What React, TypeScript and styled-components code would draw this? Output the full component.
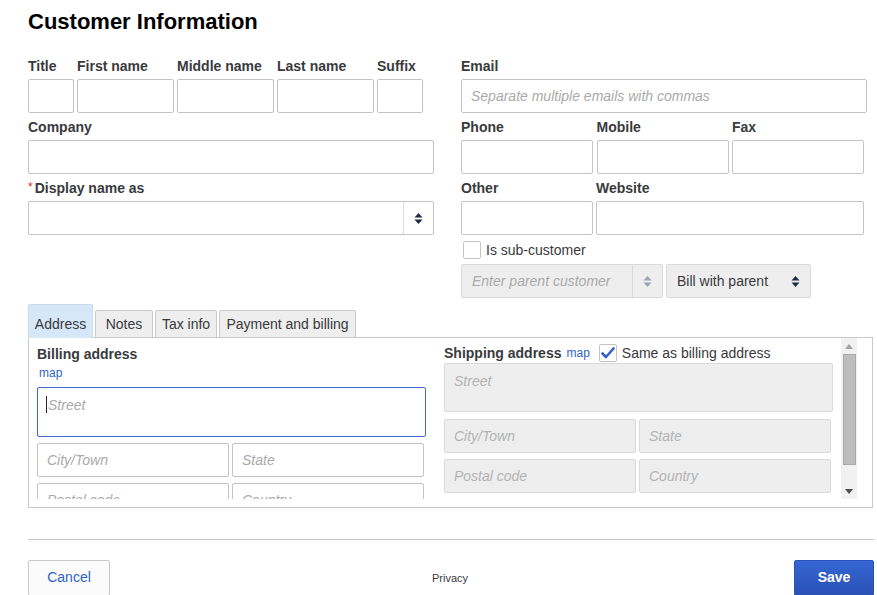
import React from 'react';
import styled, { createGlobalStyle } from 'styled-components';

const Global = createGlobalStyle`
  html, body { margin: 0; padding: 0; background: #fff; }
  body { font-family: "Liberation Sans", Arial, Helvetica, sans-serif; color: #393a3d; }
  * { box-sizing: border-box; }
  input { font-family: inherit; }
`;

const Page = styled.div`
  width: 877px;
  height: 595px;
  overflow: hidden;
  padding: 9px 3px 0 28px;
`;

const Heading = styled.h1`
  margin: 0;
  font-size: 22px;
  line-height: 25px;
  font-weight: 700;
  color: #000;
`;

const TopGrid = styled.div`
  display: grid;
  grid-template-columns: 406px 406px;
  column-gap: 27px;
  margin-top: 24px;
  align-items: start;
`;

const Column = styled.div`
  display: flex;
  flex-direction: column;
  gap: 6px;
`;

const FieldRow = styled.div<{ $cols: string; $gap?: number }>`
  display: grid;
  grid-template-columns: ${(p) => p.$cols};
  column-gap: ${(p) => p.$gap ?? 3}px;
`;

const Field = styled.div`
  display: flex;
  flex-direction: column;
  min-width: 0;
`;

const Label = styled.label`
  display: block;
  height: 16px;
  font-size: 14px;
  font-weight: 700;
  line-height: 16px;
  margin-bottom: 5px;
  color: #393a3d;
  white-space: nowrap;
`;

const Required = styled.span`
  color: #e0301e;
  font-size: 12px;
  font-weight: 400;
  line-height: 0;
  margin-right: 2px;
  vertical-align: 2px;
`;

const TextInput = styled.input<{ $disabled?: boolean; $h?: number }>`
  display: block;
  width: 100%;
  height: ${(p) => p.$h ?? 34}px;
  margin: 0;
  padding: 0 9px;
  border: 1px solid ${(p) => (p.$disabled ? '#d9d9d9' : '#c4c4c4')};
  border-radius: 2px;
  background: ${(p) => (p.$disabled ? '#eeeeee' : '#fff')};
  font-size: 14px;
  color: #393a3d;
  outline: none;
  &::placeholder {
    color: ${(p) => (p.$disabled ? '#b3b3b3' : '#aaaaaa')};
    font-style: italic;
  }
`;

const AreaBox = styled.div<{ $focused?: boolean; $h: number }>`
  height: ${(p) => p.$h}px;
  border: 1px solid ${(p) => (p.$focused ? '#3f67c6' : '#d9d9d9')};
  border-radius: 2px;
  background: ${(p) => (p.$focused ? '#fff' : '#eeeeee')};
  padding: 8px 9px 0 ${(p) => (p.$focused ? 8 : 9)}px;
  font-size: 14px;
  line-height: 18px;
  display: flex;
  align-items: flex-start;
`;

const Caret = styled.span`
  display: inline-block;
  width: 1px;
  height: 17px;
  background: #222;
  margin-right: 1px;
`;

const Placeholder = styled.span<{ $disabled?: boolean }>`
  color: ${(p) => (p.$disabled ? '#b3b3b3' : '#aaaaaa')};
  font-style: italic;
`;

const SelectBox = styled.div<{ $w?: number; $disabled?: boolean }>`
  display: flex;
  height: 34px;
  width: ${(p) => (p.$w ? `${p.$w}px` : '100%')};
  border: 1px solid ${(p) => (p.$disabled ? '#d9d9d9' : '#c4c4c4')};
  border-radius: 2px;
  background: ${(p) => (p.$disabled ? '#eeeeee' : '#fff')};
`;

const SelectValue = styled.div<{ $placeholder?: boolean }>`
  flex: 1;
  display: flex;
  align-items: center;
  padding: 0 10px;
  font-size: 14px;
  white-space: nowrap;
  color: ${(p) => (p.$placeholder ? '#aaaaaa' : '#393a3d')};
  font-style: ${(p) => (p.$placeholder ? 'italic' : 'normal')};
`;

const SelectArrow = styled.div<{ $divider?: boolean; $disabled?: boolean }>`
  width: 30px;
  flex: none;
  display: flex;
  align-items: center;
  justify-content: center;
  border-left: ${(p) => (p.$divider ? `1px solid ${p.$disabled ? '#d9d9d9' : '#dddddd'}` : 'none')};
`;

const Arrows = ({ color }: { color: string }) => (
  <svg width="9" height="13" viewBox="0 0 9 13">
    <path d="M0.5 5.5 L4.5 1 L8.5 5.5 Z" fill={color} />
    <path d="M0.5 7.5 L8.5 7.5 L4.5 12 Z" fill={color} />
  </svg>
);

const CheckRow = styled.div`
  display: flex;
  align-items: center;
  height: 18px;
  padding-left: 2px;
  gap: 5px;
  font-size: 14px;
`;

const CheckBox = styled.span<{ $checked?: boolean }>`
  width: 18px;
  height: 18px;
  flex: none;
  border: 1px solid #c4c4c4;
  border-radius: 2px;
  background: #fff;
  display: inline-flex;
  align-items: center;
  justify-content: center;
`;

const SelectRow = styled.div`
  display: flex;
  gap: 3px;
  margin-top: -1px;
`;

const TabBar = styled.div`
  display: flex;
  align-items: flex-end;
  gap: 2px;
  height: 34px;
  margin-top: 6px;
  margin-bottom: -1px;
  position: relative;
  z-index: 1;
`;

const Tab = styled.div<{ $active?: boolean; $w: number }>`
  width: ${(p) => p.$w}px;
  height: ${(p) => (p.$active ? 34 : 28)}px;
  padding-top: ${(p) => (p.$active ? 6 : 0)}px;
  display: flex;
  align-items: center;
  justify-content: center;
  font-size: 14px;
  color: #393a3d;
  background: ${(p) => (p.$active ? '#d5e7f8' : '#eeeeee')};
  border: 1px solid ${(p) => (p.$active ? '#c7dbee' : '#c9c9c9')};
  border-bottom-color: ${(p) => (p.$active ? '#d5e7f8' : '#c9c9c9')};
  border-radius: 2px 2px 0 0;
`;

const Panel = styled.div`
  width: 845px;
  height: 171px;
  border: 1px solid #c9c9c9;
  display: flex;
  padding: 0 15px 8px 8px;
`;

const ScrollArea = styled.div`
  flex: 1;
  overflow: hidden;
  display: grid;
  grid-template-columns: 389px 389px;
  column-gap: 18px;
  align-items: start;
`;

const AddressCol = styled.div<{ $top: number }>`
  display: flex;
  flex-direction: column;
  padding-top: ${(p) => p.$top}px;
`;

const SectionTitle = styled.div`
  font-size: 14px;
  font-weight: 700;
  line-height: 16px;
  color: #393a3d;
  white-space: nowrap;
`;

const MapLink = styled.a`
  font-size: 12px;
  line-height: 14px;
  color: #2f64c8;
  text-decoration: none;
  padding-left: 2px;
`;

const ShipHeader = styled.div`
  display: flex;
  align-items: center;
  height: 20px;
  font-size: 14px;
  white-space: nowrap;
`;

const Pair = styled.div<{ $mt: number }>`
  display: grid;
  grid-template-columns: 192px 192px;
  column-gap: 3px;
  margin-top: ${(p) => p.$mt}px;
`;

const Scrollbar = styled.div`
  width: 16px;
  flex: none;
  height: 161px;
  background: #f1f1f1;
  display: flex;
  flex-direction: column;
  align-items: center;
`;

const ScrollBtn = styled.div`
  height: 16px;
  width: 16px;
  display: flex;
  align-items: center;
  justify-content: center;
`;

const Thumb = styled.div`
  width: 13px;
  height: 111px;
  margin-left: 1px;
  background: #bdbdbd;
  border: 1px solid #a8a8a8;
`;

const TrackGap = styled.div`
  flex: 1;
`;

const Divider = styled.div`
  width: 846px;
  height: 1px;
  background: #c9c9c9;
  margin-top: 31px;
`;

const Footer = styled.div`
  width: 846px;
  display: flex;
  justify-content: space-between;
  align-items: center;
  margin-top: 20px;
`;

const Button = styled.button<{ $primary?: boolean; $w: number }>`
  width: ${(p) => p.$w}px;
  height: 36px;
  border-radius: 2px;
  font-family: inherit;
  font-size: 14px;
  font-weight: ${(p) => (p.$primary ? 700 : 400)};
  color: ${(p) => (p.$primary ? '#fff' : '#2f64c8')};
  background: ${(p) => (p.$primary ? 'linear-gradient(#3566d2, #2b51b6)' : '#fbfbfb')};
  border: 1px solid ${(p) => (p.$primary ? '#2b52b8' : '#c9c9c9')};
  padding: 0 0 2px;
`;

const Privacy = styled.span`
  font-size: 11px;
  color: #393a3d;
  margin-right: 4px;
`;

export default function App() {
  return (
    <>
      <Global />
      <Page>
        <Heading>Customer Information</Heading>
        <TopGrid>
          <Column>
            <FieldRow $cols="46px 97px 97px 97px 46px">
              <Field><Label>Title</Label><TextInput /></Field>
              <Field><Label>First name</Label><TextInput /></Field>
              <Field><Label>Middle name</Label><TextInput /></Field>
              <Field><Label>Last name</Label><TextInput /></Field>
              <Field><Label>Suffix</Label><TextInput /></Field>
            </FieldRow>
            <Field><Label>Company</Label><TextInput /></Field>
            <Field>
              <Label><Required>*</Required>Display name as</Label>
              <SelectBox>
                <SelectValue />
                <SelectArrow $divider><Arrows color="#1d2c44" /></SelectArrow>
              </SelectBox>
            </Field>
          </Column>
          <Column>
            <Field>
              <Label>Email</Label>
              <TextInput placeholder="Separate multiple emails with commas" />
            </Field>
            <FieldRow $cols="132px 132px 132px" $gap={3.5}>
              <Field><Label>Phone</Label><TextInput /></Field>
              <Field><Label>Mobile</Label><TextInput /></Field>
              <Field><Label>Fax</Label><TextInput /></Field>
            </FieldRow>
            <FieldRow $cols="132px 268px">
              <Field><Label>Other</Label><TextInput /></Field>
              <Field><Label>Website</Label><TextInput /></Field>
            </FieldRow>
            <CheckRow>
              <CheckBox />
              <span>Is sub-customer</span>
            </CheckRow>
            <SelectRow>
              <SelectBox $w={202} $disabled>
                <SelectValue $placeholder>Enter parent customer</SelectValue>
                <SelectArrow $divider $disabled><Arrows color="#9aa6b6" /></SelectArrow>
              </SelectBox>
              <SelectBox $w={145} $disabled>
                <SelectValue>Bill with parent</SelectValue>
                <SelectArrow><Arrows color="#1d2c44" /></SelectArrow>
              </SelectBox>
            </SelectRow>
          </Column>
        </TopGrid>

        <TabBar>
          <Tab $active $w={65}>Address</Tab>
          <Tab $w={58}>Notes</Tab>
          <Tab $w={62}>Tax info</Tab>
          <Tab $w={137}>Payment and billing</Tab>
        </TabBar>
        <Panel>
          <ScrollArea>
            <AddressCol $top={8}>
              <SectionTitle>Billing address</SectionTitle>
              <MapLink style={{ marginTop: 4 }}>map</MapLink>
              <div style={{ marginTop: 7 }}>
                <AreaBox $focused $h={50}>
                  <Caret />
                  <Placeholder>Street</Placeholder>
                </AreaBox>
              </div>
              <Pair $mt={6}>
                <TextInput placeholder="City/Town" />
                <TextInput placeholder="State" />
              </Pair>
              <Pair $mt={6}>
                <TextInput placeholder="Postal code" />
                <TextInput placeholder="Country" />
              </Pair>
            </AddressCol>
            <AddressCol $top={5}>
              <ShipHeader>
                <SectionTitle>Shipping address</SectionTitle>
                <MapLink style={{ marginLeft: 3 }}>map</MapLink>
                <CheckBox $checked style={{ marginLeft: 9 }}>
                  <svg width="14" height="12" viewBox="0 0 14 12">
                    <path d="M1.5 6.5 L5 10 L12.5 1.5" fill="none" stroke="#3a5fc4" strokeWidth="2.6" strokeLinecap="round" strokeLinejoin="round" />
                  </svg>
                </CheckBox>
                <span style={{ marginLeft: 5 }}>Same as billing address</span>
              </ShipHeader>
              <AreaBox $h={49}>
                <Placeholder $disabled>Street</Placeholder>
              </AreaBox>
              <Pair $mt={7}>
                <TextInput $disabled placeholder="City/Town" />
                <TextInput $disabled placeholder="State" />
              </Pair>
              <Pair $mt={6}>
                <TextInput $disabled placeholder="Postal code" />
                <TextInput $disabled placeholder="Country" />
              </Pair>
            </AddressCol>
          </ScrollArea>
          <Scrollbar>
            <ScrollBtn>
              <svg width="8" height="5" viewBox="0 0 8 5"><path d="M0 5 L4 0 L8 5 Z" fill="#a3a3a3" /></svg>
            </ScrollBtn>
            <Thumb />
            <TrackGap />
            <ScrollBtn>
              <svg width="8" height="5" viewBox="0 0 8 5"><path d="M0 0 L8 0 L4 5 Z" fill="#505050" /></svg>
            </ScrollBtn>
          </Scrollbar>
        </Panel>

        <Divider />
        <Footer>
          <Button $w={82}>Cancel</Button>
          <Privacy>Privacy</Privacy>
          <Button $primary $w={80}>Save</Button>
        </Footer>
      </Page>
    </>
  );
}
